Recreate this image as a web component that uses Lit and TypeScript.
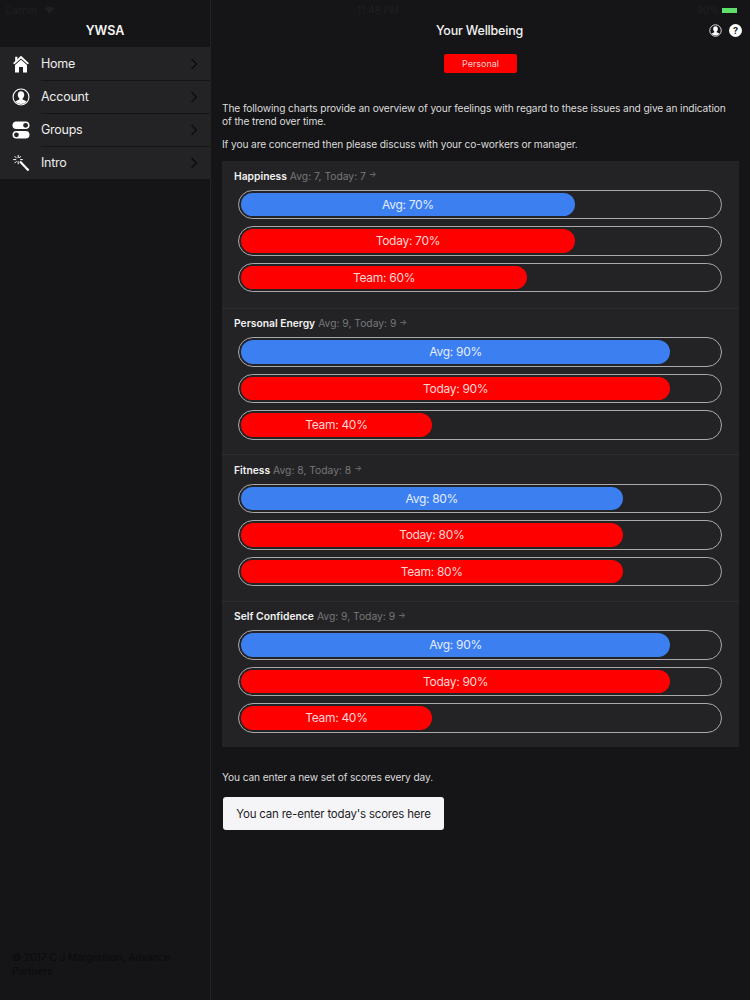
import { LitElement, html, css, svg } from "lit";
import { customElement } from "lit/decorators.js";

const chevron = html`<svg class="chev" viewBox="0 0 8 12" width="8" height="12"><path d="M1.5 1 L6.5 6 L1.5 11" fill="none" stroke="#0c0c0d" stroke-width="1.4"/></svg>`;

const personGlyph = svg`<circle cx="12" cy="12" r="10.6" fill="none" stroke="#fff" stroke-width="1.5"/>
  <path d="M12 4.2c-2.8 0-4.3 2.1-4.3 4.8 0 2 .8 3.8 2.1 4.8v1.4c-2 .9-4 1.5-5.3 2.7a10 10 0 0 0 15 0c-1.3-1.2-3.3-1.8-5.3-2.7v-1.4c1.3-1 2.1-2.8 2.1-4.8 0-2.7-1.5-4.8-4.3-4.8z" fill="#fff"/>`;

const icons: Record<string, unknown> = {
  home: html`<svg viewBox="0 0 18 18" width="18" height="18"><path d="M9 .8 L17 8.3 L15.5 9.2 L9 3.6 L2.5 9.2 L1 8.3 Z" fill="#fff"/><path d="M3.2 1.8h2.2v2.6L3.2 6.4z" fill="#fff"/><path d="M9 4.8 L15 10 V17.6 H11 V12 H7 V17.6 H3 V10 Z" fill="#fff"/></svg>`,
  account: html`<svg viewBox="0 0 24 24" width="18" height="18">${personGlyph}</svg>`,
  groups: html`<svg viewBox="0 0 18 18" width="18" height="18"><rect x="0.5" y="0.5" width="17" height="7.6" rx="3.8" fill="#fff"/><circle cx="13.6" cy="4.3" r="2.4" fill="#232325"/><rect x="0.5" y="10" width="17" height="7.6" rx="3.8" fill="#fff"/><circle cx="4.4" cy="13.8" r="2.4" fill="#232325"/></svg>`,
  intro: html`<svg viewBox="0 0 18 18" width="18" height="18"><path d="M8 7.6 L16.6 16.4" stroke="#fff" stroke-width="2.2" fill="none"/><path d="M6.2 1v3M6.2 7.2v3M1.2 5.6h3M8.2 5.6h2.6M2.6 2.2l2 2M8.8 2.2l-1.6 1.8M2.6 9.2l2-2" stroke="#fff" stroke-width="1" fill="none"/></svg>`,
};

const nav = [["home", "Home"], ["account", "Account"], ["groups", "Groups"], ["intro", "Intro"]];

const sections = [
  { name: "Happiness", note: "Avg: 7, Today: 7", bars: [["Avg", 70, "blue"], ["Today", 70, "red"], ["Team", 60, "red"]] },
  { name: "Personal Energy", note: "Avg: 9, Today: 9", bars: [["Avg", 90, "blue"], ["Today", 90, "red"], ["Team", 40, "red"]] },
  { name: "Fitness", note: "Avg: 8, Today: 8", bars: [["Avg", 80, "blue"], ["Today", 80, "red"], ["Team", 80, "red"]] },
  { name: "Self Confidence", note: "Avg: 9, Today: 9", bars: [["Avg", 90, "blue"], ["Today", 90, "red"], ["Team", 40, "red"]] },
];

@customElement("app-root")
export class AppRoot extends LitElement {
  static styles = css`
    :host {
      display: block;
      width: 750px;
      height: 1000px;
      overflow: hidden;
      background: #151416;
      color: #fff;
      font-family: Inter, "Noto Sans", sans-serif;
    }
    .page { display: flex; height: 1000px; }
    .side {
      width: 210px;
      flex: none;
      display: flex;
      flex-direction: column;
      border-right: 1px solid #232325;
      box-sizing: content-box;
    }
    .status {
      height: 20px;
      display: flex;
      align-items: center;
      font-size: 10px;
      color: #202021;
    }
    .side .status { padding-left: 5px; gap: 6px; }
    .side-title {
      height: 27px;
      display: flex;
      align-items: center;
      justify-content: center;
      padding-bottom: 7px;
      box-sizing: border-box;
      font-size: 12.5px;
      font-weight: 600;
      color: #f4f4f4;
    }
    .nav { background: #232325; }
    .row {
      height: 33px;
      display: flex;
      align-items: center;
      box-sizing: border-box;
      padding-left: 12px;
      padding-right: 12px;
      position: relative;
      font-size: 12.5px;
      letter-spacing: -0.25px;
      color: #ececec;
    }
    .row .label {
      margin-left: 11px;
      flex: 1;
    }
    .row + .row::before {
      content: "";
      position: absolute;
      left: 41px;
      right: 0;
      top: 0;
      height: 1px;
      background: #151516;
    }
    .copy {
      margin-top: auto;
      padding: 0 25px 22px 12px;
      font-size: 10.2px;
      letter-spacing: -0.05px;
      line-height: 13.5px;
      color: #0b0b0c;
    }
    .main {
      flex: 1;
      min-width: 0;
      display: flex;
      flex-direction: column;
      padding: 0 11px 0 11px;
    }
    .main .status { justify-content: space-between; position: relative; margin: 0 -11px; padding: 0 13px 0 146px; }
    .battery { display: flex; align-items: center; gap: 3px; }
    .battery i { display: block; width: 15px; height: 5px; background: #5ee06a; }
    .topbar {
      height: 20px;
      margin-bottom: 8px;
      display: flex;
      align-items: center;
      justify-content: center;
      position: relative;
      font-size: 12.5px;
      font-weight: 500;
      letter-spacing: -0.2px;
      color: #f2f2f2;
    }
    .title { margin-left: -2px; }
    .topicons {
      position: absolute;
      right: -3px;
      top: 4px;
      display: flex;
      gap: 7px;
    }
    .help {
      width: 13px;
      height: 13px;
      border-radius: 50%;
      background: #fff;
      color: #151416;
      font-size: 9px;
      font-weight: 700;
      line-height: 13px;
      text-align: center;
    }
    .seg { display: flex; justify-content: center; margin-top: 6px; }
    .seg span {
      width: 73px;
      height: 19px;
      border-radius: 2px;
      background: #fe0000;
      color: #f4d0d0;
      font-size: 9px;
      line-height: 19px;
      text-align: center;
    }
    p {
      margin: 0;
      max-width: 508px;
      font-size: 10.2px;
      letter-spacing: -0.12px;
      line-height: 13px;
      color: #dcdcdc;
    }
    .intro { margin-top: 29px; }
    .intro2 { margin-top: 10px; }
    .card {
      margin-top: 10px;
      height: 586px;
      background: #232325;
    }
    .sec { height: 146.5px; box-sizing: border-box; padding: 7px 17px 0 12px; }
    .sec + .sec { border-top: 1px solid #2d2d2f; }
    .head {
      height: 15px;
      display: flex;
      align-items: center;
      gap: 3px;
      font-size: 10.3px;
      color: #77777a;
    }
    .head b { color: #f1f1f1; font-weight: 600; }
    .head .arrow { font-size: 8px; color: #77777a; margin-top: -3px; }
    .bars { margin: 6.5px 0 0 4px; display: flex; flex-direction: column; gap: 7px; }
    .track {
      height: 29.6px;
      border: 1px solid #a9a9ab;
      border-radius: 15px;
      box-sizing: border-box;
      padding: 2px 3px 2px 2px;
    }
    .fill {
      height: 100%;
      border-radius: 12.5px;
      display: flex;
      align-items: center;
      justify-content: center;
      font-size: 12px;
      letter-spacing: -0.3px;
      color: #f4f4f4;
    }
    .blue { background: #3b7ff0; color: #e6eefc; }
    .red { background: #fe0000; color: #fbd6d6; }
    .again { margin-top: 24px; }
    .cta {
      align-self: flex-start;
      margin: 13px 0 0 1px;
      width: 221px;
      height: 33px;
      border-radius: 3px;
      background: #f5f4f7;
      color: #1d1d1f;
      font-size: 11.5px;
      letter-spacing: -0.2px;
      display: flex;
      align-items: center;
      justify-content: center;
    }
  `;

  render() {
    return html`<div class="page">
      <aside class="side">
        <div class="status">
          <span>Carrier</span>
          <svg viewBox="0 0 12 9" width="11" height="8"><path d="M6 8.6 L.4 2.8a8 8 0 0 1 11.2 0z" fill="#202021"/></svg>
        </div>
        <div class="side-title">YWSA</div>
        <nav class="nav">
          ${nav.map(([k, l]) => html`<div class="row">${icons[k]}<span class="label">${l}</span>${chevron}</div>`)}
        </nav>
        <div class="copy">© 2017 C J Margerison, Advance Partners</div>
      </aside>
      <main class="main">
        <div class="status">
          <span>11:48 PM</span>
          <span class="battery">90%<i></i></span>
        </div>
        <div class="topbar">
          <span class="title">Your Wellbeing</span>
          <div class="topicons">
            <svg viewBox="0 0 24 24" width="13" height="13">${personGlyph}</svg>
            <div class="help">?</div>
          </div>
        </div>
        <div class="seg"><span>Personal</span></div>
        <p class="intro">The following charts provide an overview of your feelings with regard to these issues and give an indication of the trend over time.</p>
        <p class="intro2">If you are concerned then please discuss with your co-workers or manager.</p>
        <section class="card">
          ${sections.map((s) => html`<div class="sec">
            <div class="head"><b>${s.name}</b><span>${s.note}</span><span class="arrow">→</span></div>
            <div class="bars">
              ${s.bars.map(([l, v, c]) => html`<div class="track"><div class="fill ${c}" style="width:${v}%">${l}: ${v}%</div></div>`)}
            </div>
          </div>`)}
        </section>
        <p class="again">You can enter a new set of scores every day.</p>
        <div class="cta">You can re-enter today's scores here</div>
      </main>
    </div>`;
  }
}
